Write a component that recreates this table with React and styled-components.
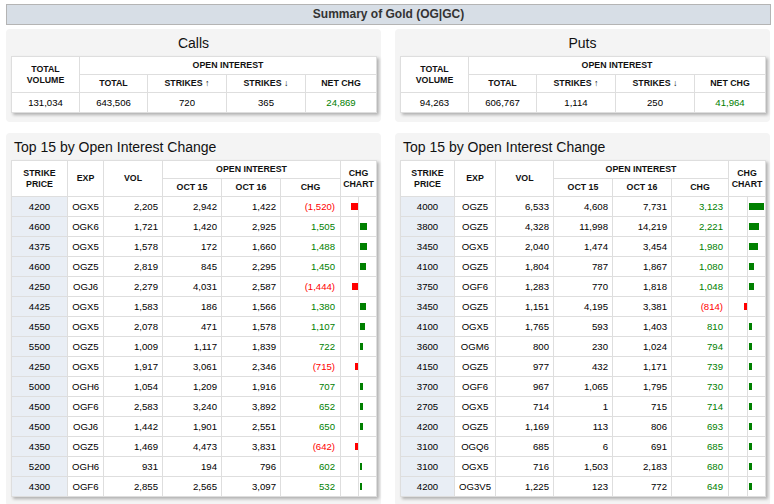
import styled, { createGlobalStyle } from "styled-components";

const GlobalStyle = createGlobalStyle`
  body {
    margin: 0;
    background: #fff;
    font-family: "Liberation Sans", Arial, sans-serif;
    color: #111;
  }
`

const callRows = [
  ['4200', 'OGX5', '2,205', '2,942', '1,422', -1520],
  ['4600', 'OGK6', '1,721', '1,420', '2,925', 1505],
  ['4375', 'OGX5', '1,578', '172', '1,660', 1488],
  ['4600', 'OGZ5', '2,819', '845', '2,295', 1450],
  ['4250', 'OGJ6', '2,279', '4,031', '2,587', -1444],
  ['4425', 'OGX5', '1,583', '186', '1,566', 1380],
  ['4550', 'OGX5', '2,078', '471', '1,578', 1107],
  ['5500', 'OGZ5', '1,009', '1,117', '1,839', 722],
  ['4250', 'OGX5', '1,917', '3,061', '2,346', -715],
  ['5000', 'OGH6', '1,054', '1,209', '1,916', 707],
  ['4500', 'OGF6', '2,583', '3,240', '3,892', 652],
  ['4500', 'OGJ6', '1,442', '1,901', '2,551', 650],
  ['4350', 'OGZ5', '1,469', '4,473', '3,831', -642],
  ['5200', 'OGH6', '931', '194', '796', 602],
  ['4300', 'OGF6', '2,855', '2,565', '3,097', 532],
]

const putRows = [
  ['4000', 'OGZ5', '6,533', '4,608', '7,731', 3123],
  ['3800', 'OGZ5', '4,328', '11,998', '14,219', 2221],
  ['3450', 'OGX5', '2,040', '1,474', '3,454', 1980],
  ['4100', 'OGZ5', '1,804', '787', '1,867', 1080],
  ['3750', 'OGF6', '1,283', '770', '1,818', 1048],
  ['3450', 'OGZ5', '1,151', '4,195', '3,381', -814],
  ['4100', 'OGX5', '1,765', '593', '1,403', 810],
  ['3600', 'OGM6', '800', '230', '1,024', 794],
  ['4150', 'OGZ5', '977', '432', '1,171', 739],
  ['3700', 'OGF6', '967', '1,065', '1,795', 730],
  ['2705', 'OGX5', '714', '1', '715', 714],
  ['4200', 'OGZ5', '1,169', '113', '806', 693],
  ['3100', 'OGQ6', '685', '6', '691', 685],
  ['3100', 'OGX5', '716', '1,503', '2,183', 680],
  ['4200', 'OG3V5', '1,225', '123', '772', 649],
]

// largest change across both tables gets the full bar
const barScale = 15 / 3123

const fmt = (n) => {
  const s = Math.abs(n).toLocaleString('en-US')
  return n < 0 ? `(${s})` : s
}

export default function App() {
  return (
    <Page>
      <GlobalStyle />
      <TitleBar>Summary of Gold (OG|GC)</TitleBar>
      <Grid>
        <SummaryPanel title="Calls" values={['131,034', '643,506', '720', '365', '24,869']} />
        <SummaryPanel title="Puts" values={['94,263', '606,767', '1,114', '250', '41,964']} />
        <TopPanel rows={callRows} widths={[56, 36, 59, 59, 59, 60, 18, 18]} />
        <TopPanel rows={putRows} widths={[54, 41, 58, 59, 59, 57, 19, 18]} />
      </Grid>
    </Page>
  )
}

function SummaryPanel({ title, values }) {
  const [volume, total, up, down, net] = values
  return (
    <Panel>
      <PanelTitle $center>{title}</PanelTitle>
      <DataTable>
        <colgroup>
          {[68, 68, 79, 79, 71].map((w, i) => <col key={i} style={{ width: w }} />)}
        </colgroup>
        <thead>
          <tr>
            <Th rowSpan={2}>TOTAL<br />VOLUME</Th>
            <Th colSpan={4}>OPEN INTEREST</Th>
          </tr>
          <tr>
            <Th>TOTAL</Th>
            <Th>STRIKES <Arrow>↑</Arrow></Th>
            <Th>STRIKES <Arrow>↓</Arrow></Th>
            <Th>NET CHG</Th>
          </tr>
        </thead>
        <tbody>
          <tr>
            <Td $align="center">{volume}</Td>
            <Td $align="center">{total}</Td>
            <Td $align="center">{up}</Td>
            <Td $align="center">{down}</Td>
            <Td $align="center" $tone="pos">{net}</Td>
          </tr>
        </tbody>
      </DataTable>
    </Panel>
  )
}

function TopPanel({ rows, widths }) {
  return (
    <Panel>
      <PanelTitle>Top 15 by Open Interest Change</PanelTitle>
      <DataTable>
        <colgroup>
          {widths.map((w, i) => <col key={i} style={{ width: w }} />)}
        </colgroup>
        <thead>
          <tr>
            <Th rowSpan={2}>STRIKE<br />PRICE</Th>
            <Th rowSpan={2}>EXP</Th>
            <Th rowSpan={2}>VOL</Th>
            <Th colSpan={3}>OPEN INTEREST</Th>
            <Th rowSpan={2} colSpan={2}>CHG<br />CHART</Th>
          </tr>
          <tr>
            <Th>OCT 15</Th>
            <Th>OCT 16</Th>
            <Th>CHG</Th>
          </tr>
        </thead>
        <tbody>
          {rows.map(([strike, exp, vol, oct15, oct16, chg], i) => (
            <tr key={i}>
              <Td $align="center" $shade>{strike}</Td>
              <Td $align="center">{exp}</Td>
              <Td>{vol}</Td>
              <Td>{oct15}</Td>
              <Td>{oct16}</Td>
              <Td $tone={chg < 0 ? 'neg' : 'pos'} $wide>{fmt(chg)}</Td>
              <ChartCell $neg>
                {chg < 0 && <Bar $neg style={{ width: Math.max(2, Math.floor(-chg * barScale)) }} />}
              </ChartCell>
              <ChartCell>
                {chg > 0 && <Bar style={{ width: Math.max(2, Math.floor(chg * barScale)) }} />}
              </ChartCell>
            </tr>
          ))}
        </tbody>
      </DataTable>
    </Panel>
  )
}

const Page = styled.div`
  padding: 4px 0 0 6px;
  width: 765px;
`

const TitleBar = styled.div`
  height: 19px;
  line-height: 19px;
  background: #d7dee6;
  border: 1px solid #b4b4b4;
  text-align: center;
  font-size: 12px;
  font-weight: bold;
  color: #333;
`

const Grid = styled.div`
  display: grid;
  grid-template-columns: 375px 375px;
  column-gap: 14px;
  row-gap: 11px;
  margin-top: 4px;
`

const Panel = styled.div`
  background: #f4f4f4;
  border-radius: 4px;
  padding: 0 5px 9px 5px;
`

const PanelTitle = styled.div`
  height: 27px;
  line-height: 28px;
  font-size: 14px;
  color: #111;
  text-align: ${(p) => (p.$center ? 'center' : 'left')};
  padding-left: ${(p) => (p.$center ? '0' : '3px')};
`

const DataTable = styled.table`
  width: 365px;
  table-layout: fixed;
  border-collapse: collapse;
  background: #fff;
  border: 1px solid #d4d4d4;
  box-shadow: 2px 2px 3px rgba(0, 0, 0, 0.28);
`

const Th = styled.th`
  height: 17px;
  padding: 0 2px;
  border: 1px solid #dedede;
  font-size: 8.8px;
  line-height: 11px;
  font-weight: bold;
  color: #111;
  text-align: center;
  vertical-align: middle;
  white-space: nowrap;
`

const Arrow = styled.span`
  font-weight: normal;
  font-size: 9px;
`

const Td = styled.td`
  height: 19px;
  padding: 0 ${(p) => (p.$wide ? '5px' : '4px')} 0 4px;
  border: 1px solid #dedede;
  font-size: 9.6px;
  text-align: ${(p) => p.$align || 'right'};
  vertical-align: middle;
  white-space: nowrap;
  background: ${(p) => (p.$shade ? '#e9eef5' : '#fff')};
  color: ${(p) => (p.$tone === 'pos' ? '#008000' : p.$tone === 'neg' ? '#ff0000' : '#000')};
`

const ChartCell = styled.td`
  height: 19px;
  padding: 0;
  border: 1px solid #dedede;
  vertical-align: middle;

  & > div {
    margin-left: ${(p) => (p.$neg ? 'auto' : '1px')};
  }
`

const Bar = styled.div`
  height: 7px;
  background: ${(p) => (p.$neg ? '#ff0000' : '#008000')};
`
